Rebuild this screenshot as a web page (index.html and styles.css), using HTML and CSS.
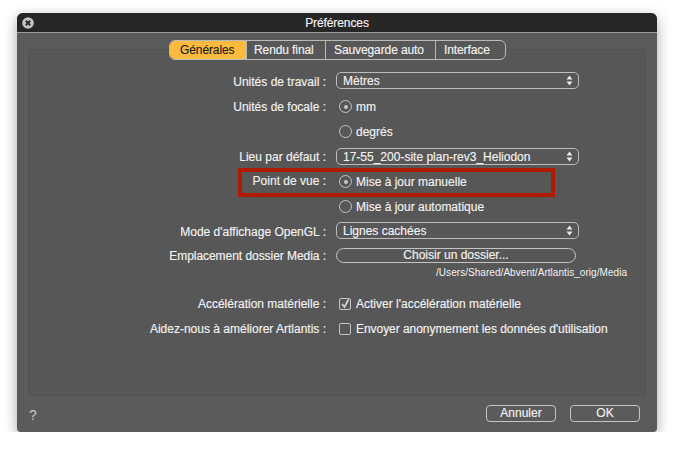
FILE: index.html
```html
<!DOCTYPE html>
<html lang="fr">
<head>
    <meta charset="UTF-8">
    <meta name="viewport" content="width=device-width, initial-scale=1.0">
    <title>Préférences</title>
    <link rel="stylesheet" href="styles.css">
</head>
<body>
    <div class="window">
        <div class="titlebar">
            <svg class="close" width="12" height="12" viewBox="0 0 12 12">
                <circle cx="6" cy="6" r="5.8" fill="#c4c4c4"/>
                <path d="M3.8 3.8l4.4 4.4M8.2 3.8l-4.4 4.4" stroke="#2a2a2a" stroke-width="2"/>
            </svg>
            <span class="title">Préférences</span>
        </div>
        <div class="content">
            <div class="panel">
                <div class="highlight"></div>
                <div class="tabs">
                    <div class="tab tab-general active">Générales</div>
                    <div class="tab tab-rendu">Rendu final</div>
                    <div class="tab tab-sauvegarde">Sauvegarde auto</div>
                    <div class="tab tab-interface">Interface</div>
                </div>

                <div class="row">
                    <div class="label">Unités de travail :</div>
                    <div class="select up">Mètres
                        <svg class="arrows" width="7" height="11" viewBox="0 0 7 11"><path d="M3.5 0.5L6.5 4.5H0.5ZM3.5 10.5L0.5 6.5H6.5Z" fill="#e8e8e8"/></svg>
                    </div>
                </div>
                <div class="row">
                    <div class="label">Unités de focale :</div>
                    <div class="choice"><span class="radio on"></span>mm</div>
                </div>
                <div class="row">
                    <div class="label"></div>
                    <div class="choice"><span class="radio"></span>degrés</div>
                </div>
                <div class="row">
                    <div class="label">Lieu par défaut :</div>
                    <div class="select">17-55_200-site plan-rev3_Heliodon
                        <svg class="arrows" width="7" height="11" viewBox="0 0 7 11"><path d="M3.5 0.5L6.5 4.5H0.5ZM3.5 10.5L0.5 6.5H6.5Z" fill="#e8e8e8"/></svg>
                    </div>
                </div>
                <div class="row">
                    <div class="label up">Point de vue :</div>
                    <div class="choice"><span class="radio on"></span>Mise à jour manuelle</div>
                </div>
                <div class="row">
                    <div class="label"></div>
                    <div class="choice"><span class="radio"></span>Mise à jour automatique</div>
                </div>
                <div class="row">
                    <div class="label">Mode d'affichage OpenGL :</div>
                    <div class="select up">Lignes cachées
                        <svg class="arrows" width="7" height="11" viewBox="0 0 7 11"><path d="M3.5 0.5L6.5 4.5H0.5ZM3.5 10.5L0.5 6.5H6.5Z" fill="#e8e8e8"/></svg>
                    </div>
                </div>
                <div class="row">
                    <div class="label up tight">Emplacement dossier Media :</div>
                    <div class="pill">Choisir un dossier...</div>
                </div>
                <div class="path">/Users/Shared/Abvent/Artlantis_orig/Media</div>

                <div class="row row-gap">
                    <div class="label">Accélération matérielle :</div>
                    <div class="choice">
                        <span class="check">
                            <svg width="10" height="10" viewBox="0 0 10 10"><path d="M2 5L4.5 8L8.5 0.5" fill="none" stroke="#d4d4d4" stroke-width="1.8"/></svg>
                        </span>Activer l'accélération matérielle
                    </div>
                </div>
                <div class="row">
                    <div class="label">Aidez-nous à améliorer Artlantis :</div>
                    <div class="choice tight"><span class="check"></span>Envoyer anonymement les données d'utilisation</div>
                </div>
            </div>
            <div class="footer">
                <span class="help">?</span>
                <div class="button">Annuler</div>
                <div class="button">OK</div>
            </div>
        </div>
    </div>
</body>
</html>
```

FILE: styles.css
```css
body {
    margin: 0;
    background-color: #fff;
    font-family: "Liberation Sans", Arial, sans-serif;
    font-size: 12px;
    color: #f2f2f2;
    -webkit-text-stroke: 0.15px #f2f2f2;
}
.window {
    width: 640px;
    height: 419px;
    margin: 13px 0 0 17px;
    background-color: #5b5b5b;
    border-radius: 6px 6px 4px 4px;
    box-shadow: 0 4px 14px rgba(0,0,0,0.35);
    overflow: hidden;
}
.titlebar {
    position: relative;
    height: 19px;
    background-color: #262626;
    border-bottom: 1px solid #9a9a9a;
    text-align: center;
    line-height: 20px;
}
.title {
    letter-spacing: -0.1px;
}
.close {
    position: absolute;
    left: 5px;
    top: 4px;
}
.content {
    padding: 16px 11px 0;
}
.panel {
    position: relative;
    height: 347px;
    box-sizing: border-box;
    padding-top: 19px;
    background-color: #575757;
    border: 1px solid #525252;
    border-radius: 4px;
}
.tabs {
    position: absolute;
    top: -10px;
    left: 140px;
    display: flex;
    height: 18px;
    background-color: #575757;
    border: 1px solid #b9b9b9;
    border-radius: 6px;
    overflow: hidden;
}
.tab {
    box-sizing: border-box;
    padding-left: 8px;
    line-height: 18px;
    letter-spacing: -0.1px;
    border-left: 1px solid #b9b9b9;
}
.tab-general {
    width: 76px;
    padding-left: 10px;
    border-left: none;
}
.tab-rendu {
    width: 79px;
    padding-left: 7px;
}
.tab-sauvegarde {
    width: 110px;
}
.tab-interface {
    width: 70px;
}
.tab.active {
    background-color: #ffbb3d;
    color: #1c1c1c;
    -webkit-text-stroke: 0.15px #1c1c1c;
}
.row {
    display: flex;
    align-items: center;
    height: 25px;
}
.row-gap {
    margin-top: 12px;
}
.label {
    width: 297px;
    flex-shrink: 0;
    text-align: right;
}
.up {
    margin-top: -2px;
}
.tight {
    letter-spacing: -0.05px;
}
.select {
    position: relative;
    width: 243px;
    height: 17px;
    box-sizing: border-box;
    margin-left: 10px;
    padding-left: 6px;
    line-height: 16px;
    border: 1px solid #bdbdbd;
    border-radius: 5px;
}
.arrows {
    position: absolute;
    right: 5px;
    top: 2px;
}
.choice {
    display: flex;
    align-items: center;
    margin-left: 13px;
}
.radio {
    width: 11px;
    height: 11px;
    margin-right: 4px;
    border: 1px solid #c4c4c4;
    border-radius: 50%;
    display: flex;
    align-items: center;
    justify-content: center;
}
.radio.on::after {
    content: "";
    width: 4px;
    height: 4px;
    border-radius: 50%;
    background-color: #c8c8c8;
}
.check {
    width: 10px;
    height: 10px;
    margin-right: 5px;
    border: 1px solid #c4c4c4;
    border-radius: 2px;
    display: flex;
}
.pill {
    width: 240px;
    height: 15px;
    box-sizing: border-box;
    margin: -2px 0 0 10px;
    line-height: 13px;
    text-align: center;
    border: 1px solid #c4c4c4;
    border-radius: 8px;
}
.path {
    margin: -2px 0 0 407px;
    height: 12px;
    line-height: 12px;
    font-size: 10px;
    letter-spacing: 0.05px;
    -webkit-text-stroke: 0;
}
.highlight {
    position: absolute;
    left: 209px;
    top: 118px;
    width: 309px;
    height: 21px;
    border: 4px solid #b01a00;
}
.footer {
    display: flex;
    align-items: center;
    height: 34px;
    padding-right: 6px;
}
.help {
    margin: 4px auto 0 1px;
    font-size: 14px;
    color: #c8c8c8;
    -webkit-text-stroke: 0;
}
.button {
    width: 68px;
    height: 15px;
    margin-left: 14px;
    line-height: 14px;
    text-align: center;
    border: 1px solid #c4c4c4;
    border-radius: 4px;
}
```
